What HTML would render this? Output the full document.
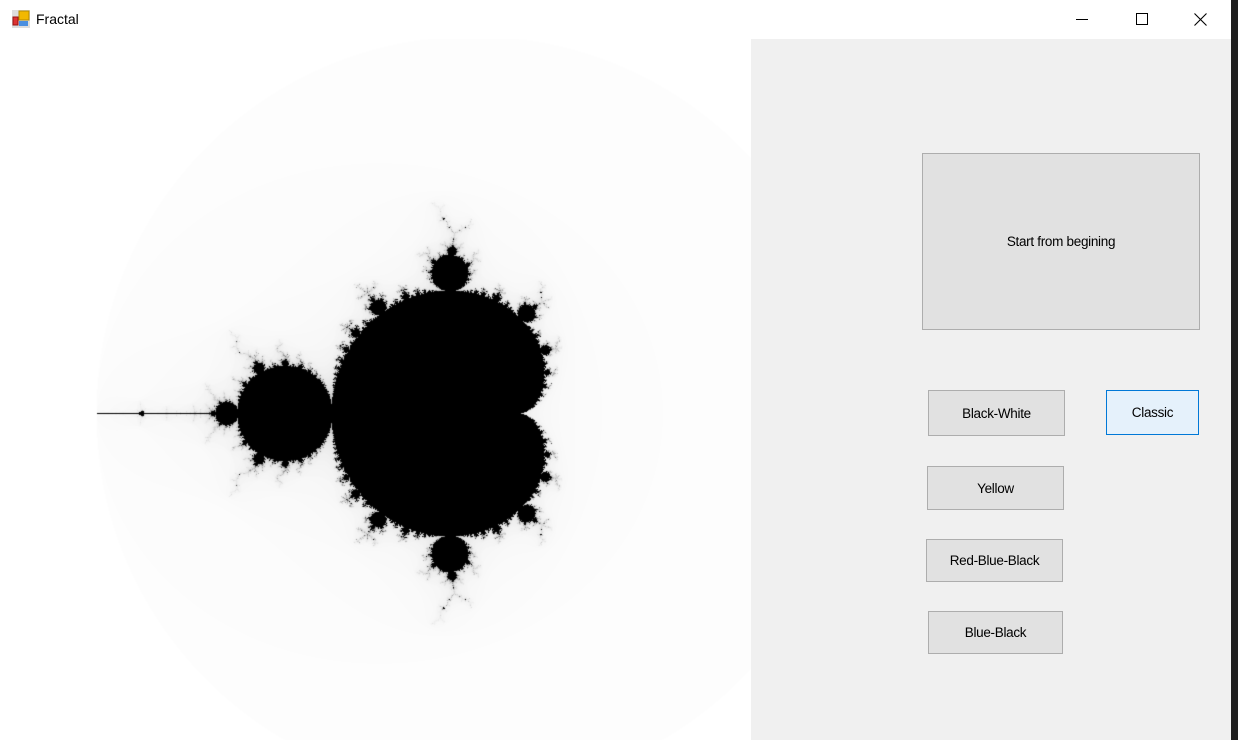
<!DOCTYPE html>
<html><head><meta charset="utf-8"><style>
html,body{margin:0;padding:0;width:1238px;height:740px;overflow:hidden;background:#1e1e1e;font-family:"Liberation Sans",sans-serif;}
#win{position:absolute;left:0;top:0;width:1231px;height:740px;background:#fff;}
#title{position:absolute;left:0;top:0;width:1231px;height:39px;background:#fff;}
#title .t{position:absolute;left:36px;top:11px;font-size:14px;color:#000;}
#panel{position:absolute;left:751px;top:39px;width:480px;height:701px;background:#f0f0f0;}
.btn{position:absolute;box-sizing:border-box;background:#e1e1e1;border:1px solid #adadad;font-size:13.5px;color:#000;display:flex;align-items:center;justify-content:center;letter-spacing:-0.3px;}
canvas{position:absolute;left:0;top:39px;}
</style></head><body>
<div id="win">
<div id="title">
<svg style="position:absolute;left:12px;top:10px" width="18" height="18" viewBox="0 0 18 18"><rect x="0" y="0" width="18" height="18" fill="#ddd"/><rect x="7" y="1" width="10" height="9" fill="#f2b800" stroke="#b58a00"/><rect x="1" y="7" width="5" height="8" fill="#d33" stroke="#911"/><rect x="7" y="11" width="9" height="5" fill="#4a8fe0"/></svg>
<div class="t">Fractal</div>
<svg style="position:absolute;left:1076px;top:19px" width="12" height="2"><rect width="12" height="1" fill="#000"/></svg>
<svg style="position:absolute;left:1136px;top:13px" width="12" height="12"><rect x="0.5" y="0.5" width="11" height="11" fill="none" stroke="#000"/></svg>
<svg style="position:absolute;left:1194px;top:13px" width="13" height="13"><path d="M0.5 0.5L12.5 12.5M12.5 0.5L0.5 12.5" stroke="#000" stroke-width="1.1"/></svg>
</div>
<canvas id="c" width="751" height="701"></canvas>
<div id="panel"></div>
<div class="btn" style="left:922px;top:153px;width:278px;height:177px;">Start from begining</div>
<div class="btn" style="left:928px;top:390px;width:137px;height:46px;">Black-White</div>
<div class="btn" style="left:1106px;top:390px;width:93px;height:45px;background:#e5f1fb;border-color:#0078d7;">Classic</div>
<div class="btn" style="left:927px;top:466px;width:137px;height:44px;">Yellow</div>
<div class="btn" style="left:926px;top:539px;width:137px;height:43px;">Red-Blue-Black</div>
<div class="btn" style="left:928px;top:611px;width:135px;height:43px;">Blue-Black</div>
</div>
<script>
var cv=document.getElementById('c'),ctx=cv.getContext('2d');
var W=751,H=701,img=ctx.createImageData(W,H),d=img.data;
var s=1/188.4,cx0=473,cy0=413-39,M=300;
for(var py=0;py<H;py++){var ci=(py-cy0)*s;for(var px=0;px<W;px++){var cr=(px-cx0)*s;
var x=0,y=0,n=0;while(n<M&&x*x+y*y<=4){var t=x*x-y*y+cr;y=2*x*y+ci;x=t;n++;}
var v;if(n>=M)v=0;else{v=254-Math.min(254,Math.pow(n,1.35)*0.45);if(n<=1)v=255;}
var i=(py*W+px)*4;d[i]=d[i+1]=d[i+2]=v;d[i+3]=255;}}
ctx.putImageData(img,0,0);
</script>
</body></html>
